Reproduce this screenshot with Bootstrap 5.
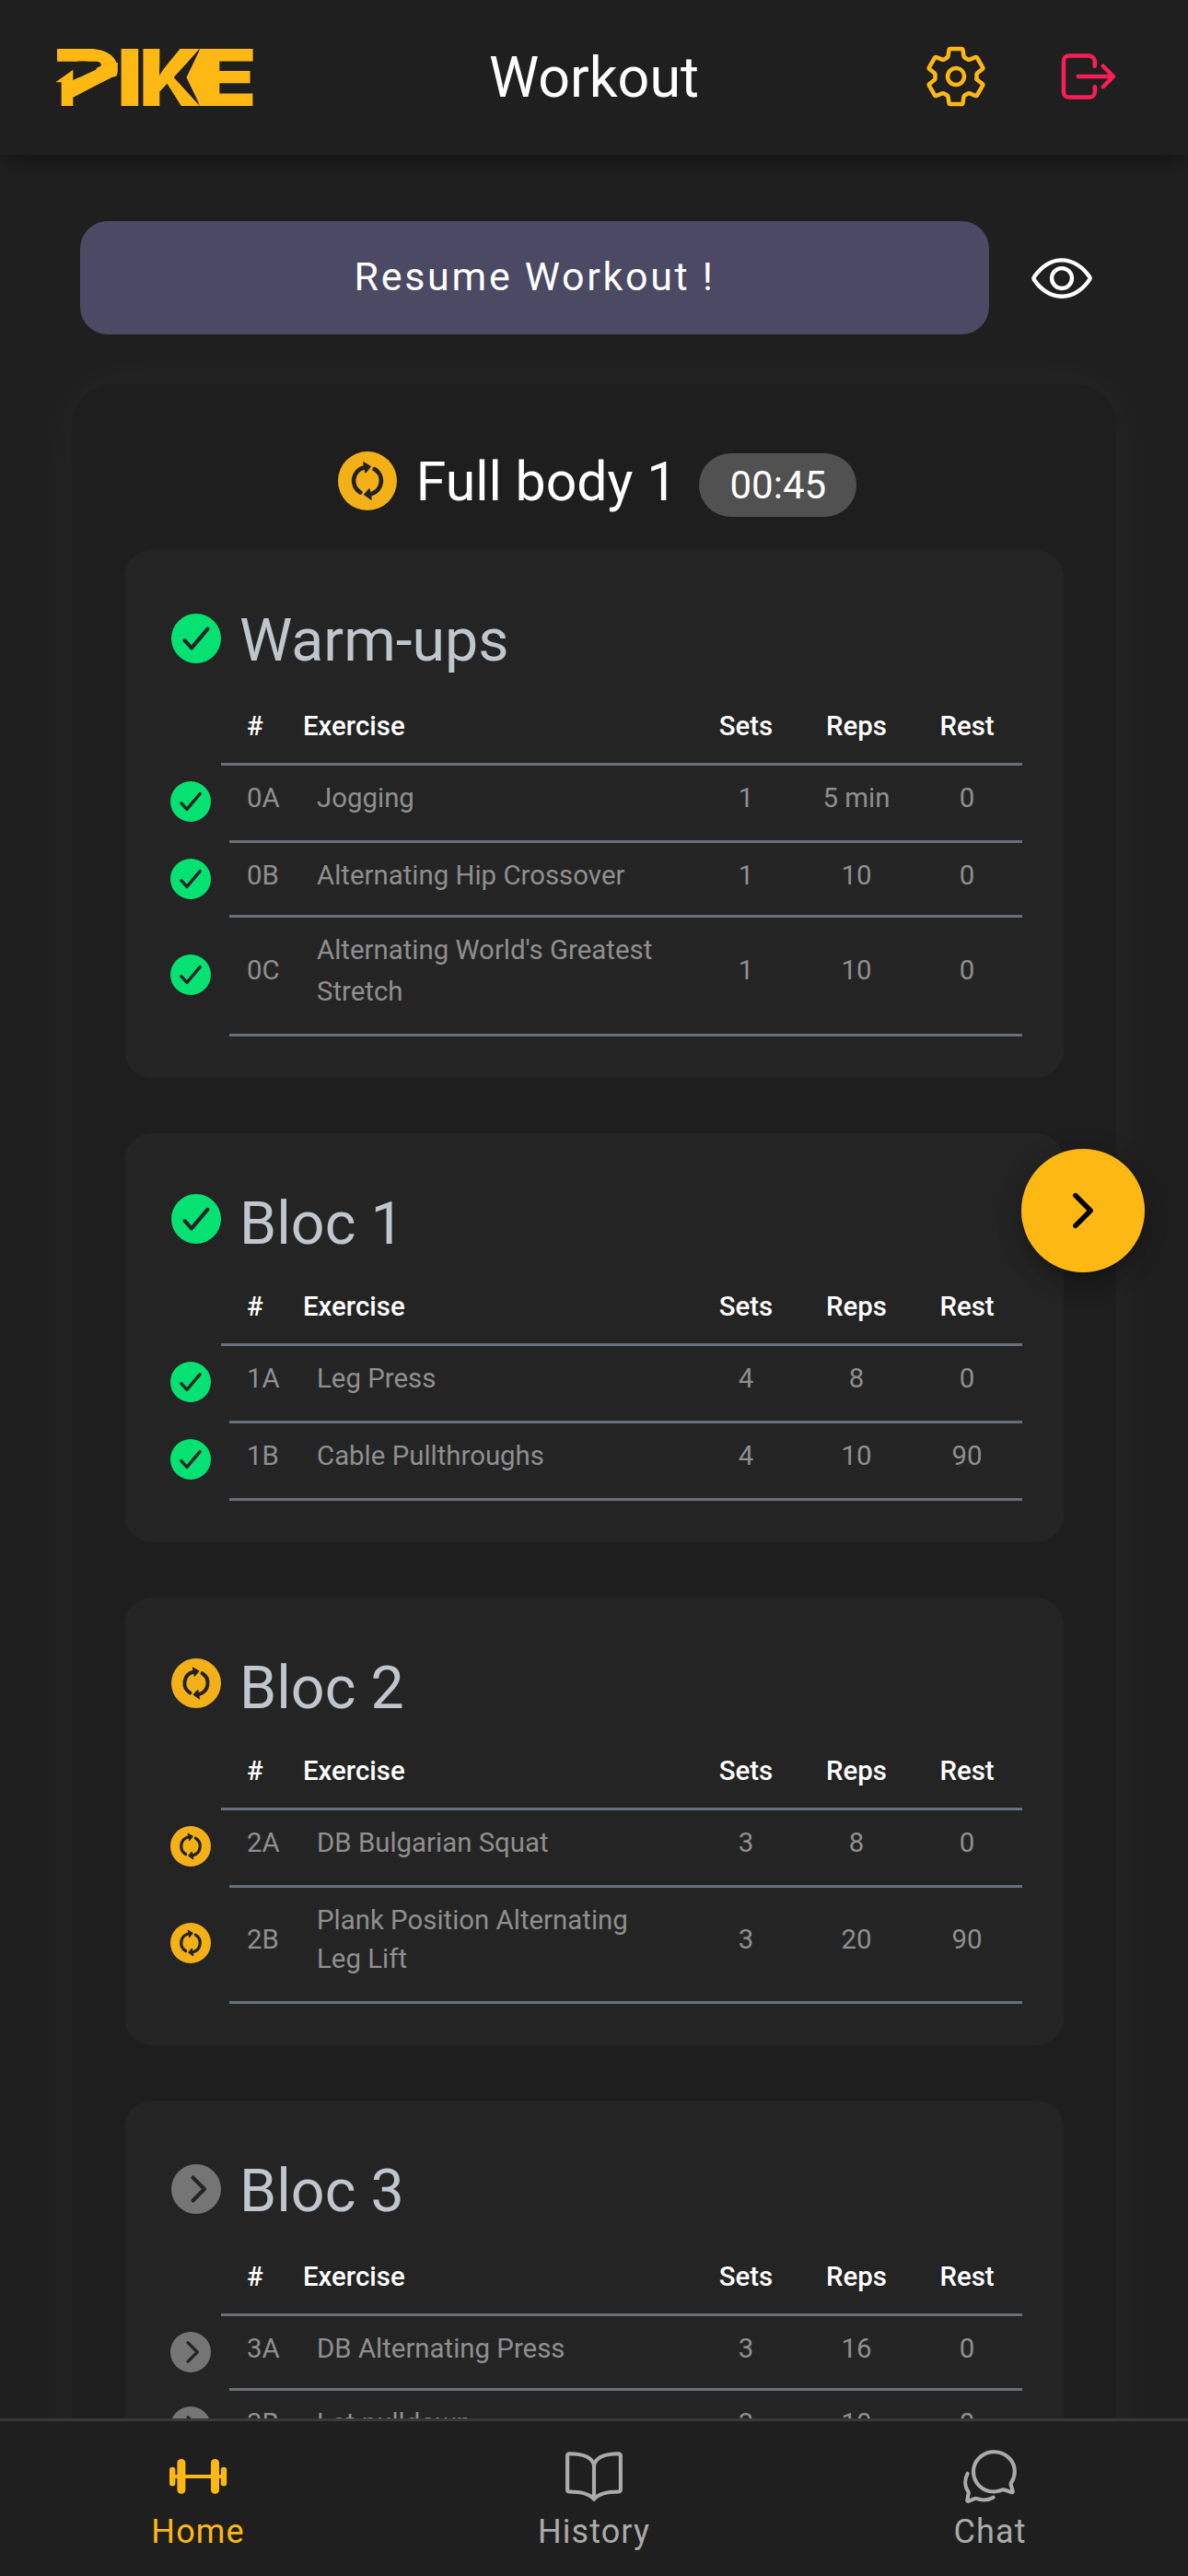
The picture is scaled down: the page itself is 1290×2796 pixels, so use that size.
<!DOCTYPE html>
<html lang="en">
<head>
<meta charset="utf-8">
<meta name="viewport" content="width=device-width, initial-scale=1">
<title>Workout</title>
<link href="https://cdn.jsdelivr.net/npm/bootstrap@5.3.0/dist/css/bootstrap.min.css" rel="stylesheet">
<style>
  html, body { height: 2796px; overflow: hidden; }
  body { background: #1f1f1f; color: #fff; font-family: Roboto, "Liberation Sans", sans-serif; }
  svg { display: block; flex: none; }
  .ln { fill: none; stroke: currentColor; stroke-width: 32; stroke-linecap: round; stroke-linejoin: round; }

  .topbar { height: 168px; display: grid; grid-template-columns: 1fr auto 1fr; padding: 0 72px 0 60px; background: #1f1f1f; box-shadow: 0 9px 24px -6px rgba(0,0,0,.5); }
  .topbar h1 { font-size: 61px; font-weight: 400; line-height: 84px; transform: translateX(6px); }
  .tools { gap: 72px; padding-bottom: 2px; }
  .amber { color: #fdb813; }
  .rose { color: #fa1e56; }
  .brand { overflow: visible; }
  .brand-type { font-family: Inter, sans-serif; font-weight: 900; font-size: 255.8px; fill: #fdb813; }
  .brand-gold { fill: #fdb813; }
  .brand-cut { fill: #1f1f1f; }

  .resume-row { padding: 72px 0 0 87px; gap: 44px; }
  .btn-resume { width: 987px; height: 123px; border: 0; border-radius: 30px; background: #4b4963; color: #fff; font-size: 43px; letter-spacing: 2.7px; padding: 0 0 2px; }
  .btn-resume:hover { background: #4b4963; color: #fff; }

  .panel { width: 1134px; height: 2400px; margin: 54px 0 0 78px; padding: 0 57px; border-radius: 45px; background: #1e1e1e; box-shadow: 0 0 60px rgba(255,255,255,.04); }
  .panel-title { height: 180px; padding: 73px 0 0 7px; }
  .panel-title h2 { font-size: 59px; font-weight: 400; line-height: 64px; margin: 1px 24px 0 21px; }
  .timer { width: 171px; height: 69px; border-radius: 35px; background: #515151; font-size: 42px; font-weight: 400; line-height: 69px; padding: 0; margin-top: 2px; }

  .bloc { width: 1020px; border: 0; border-radius: 30px; background: #242424; padding: 0 45px 45px 50px; margin-bottom: 60px; color: #8f8f8f; }
  .bloc-head { height: 150px; padding-top: 65px; }
  .bloc-head svg { margin: 1px 0 0 1px; }
  .bloc-head h3 { font-size: 64.5px; font-weight: 400; line-height: 66px; color: #c0c6cd; margin: 0 0 0 20px; }
  .bloc-head.tall { height: 153px; padding-top: 65px; }
  .bloc-head.tall svg { margin-top: 4px; }

  .line { border-bottom: 3px solid #67707b; font-size: 29.4px; line-height: 43px; }
  .head-line { height: 81px; margin-left: 55px; padding-bottom: 2px; color: #fff; font-weight: 500; }
  .c-no { flex: none; }
  .head-line .c-no { width: 89px; padding-left: 28px; }
  .row-line { height: 84px; }
  .row-line > svg { margin-bottom: 6px; }
  .row-line .line { margin-left: 20px; height: 100%; padding-bottom: 11px; }
  .row-line .c-no { width: 95px; padding-left: 19px; }
  .row-line .c-name { padding-right: 30px; flex: 1 1 0; }
  .c-num { width: 120px; flex: none; text-align: center; }
  .h82 { height: 81px; }
  .h82 .line { padding-bottom: 8px; }
  .h82 > svg { margin-bottom: 3px; }
  .h128 { height: 129px; }
  .h128 .c-name { line-height: 45px; }
  .h126 { height: 126px; }
  .h126 .c-name { line-height: 42px; }

  .fab { width: 134px; height: 134px; left: 1109px; top: 1247px; border-radius: 50%; background: #fdb813; box-shadow: 0 9px 15px -3px rgba(0,0,0,.2), 0 14px 30px rgba(0,0,0,.12), 0 3px 36px rgba(0,0,0,.08); }
  .tabs { height: 171px; background: #1f1f1f; border-top: 3px solid #383838; color: #ababab; }
  .tabs a { flex: 1; color: inherit; text-decoration: none; padding-top: 27px; font-size: 36px; letter-spacing: 1.1px; line-height: 54px; }
  .tabs a.active { color: #fdb813; }
</style>
</head>
<body>
<svg width="0" height="0" class="position-absolute">
  <symbol id="done" viewBox="48 48 416 416"><circle cx="256" cy="256" r="208" fill="#05e272"/><path d="M352 176L217.600 336 160 272" fill="none" stroke="#242424" stroke-width="32" stroke-linecap="round" stroke-linejoin="round"/></symbol>
  <symbol id="sync" viewBox="52 31 190 190"><circle cx="147" cy="126" r="95" fill="#f3b017"/><g fill="none" stroke="#222" stroke-width="14" stroke-linecap="round"><path d="M124 163A44 44 0 0 1 135 83"/><path d="M170 88A44 44 0 0 1 159 168"/></g><g fill="#222" stroke="#222" stroke-width="5" stroke-linejoin="round"><path d="M135 67L156 80 141 98Z"/><path d="M159 185L138 170 153 153Z"/></g></symbol>
  <symbol id="todo" viewBox="48 48 416 416"><circle cx="256" cy="256" r="208" fill="#757575"/><path d="M229 160l96 96-96 96" fill="none" stroke="#242424" stroke-width="32" stroke-linecap="round" stroke-linejoin="round"/></symbol>
</svg>

<div class="d-flex flex-column h-100 position-relative">
  <header class="topbar align-items-center flex-shrink-0">
    <svg class="brand" width="233.300" height="108" viewBox="30 -44 700 324" role="img" aria-label="PIKE">
      <g class="brand-type">
        <text x="20" y="211" textLength="222" lengthAdjust="spacingAndGlyphs">P</text>
        <text x="232" y="211" textLength="82" lengthAdjust="spacingAndGlyphs">I</text>
        <text x="304" y="211" textLength="206" lengthAdjust="spacingAndGlyphs">K</text>
        <text x="484" y="211" textLength="204" lengthAdjust="spacingAndGlyphs">E</text>
      </g>
      <!-- bolt arrow running through the first letter -->
      <path class="brand-cut" d="M28 66H165Q180 67 180 80L88 128V215H28ZM88 178L214 118 238 112V215H88Z"/>
      <path class="brand-gold" d="M31 134L88 93V128L180 85V70H234Q234 108 206 122L88 183V211H50V134Z"/>
      <!-- arrowhead notch between the last two letters -->
      <path class="brand-gold" d="M502 25L457 118 502 211H530V25Z"/>
      <path class="brand-cut" d="M501 25L416 118 501 211 457 118Z"/>
    </svg>
    <h1 class="m-0">Workout</h1>
    <div class="tools d-flex justify-content-end">
      <svg class="amber" width="72" height="72" viewBox="0 0 512 512"><path class="ln" d="M262.290 192.310a64 64 0 1057.400 57.400 64.130 64.130 0 00-57.400-57.400zM416.390 256a154.340 154.340 0 01-1.530 20.790l45.210 35.460a10.810 10.810 0 012.450 13.750l-42.770 74a10.810 10.810 0 01-13.140 4.590l-44.900-18.080a16.110 16.110 0 00-15.170 1.750A164.480 164.480 0 01325 400.800a15.940 15.940 0 00-8.820 12.140l-6.730 47.890a11.080 11.080 0 01-10.680 9.170h-85.540a11.110 11.110 0 01-10.690-8.870l-6.720-47.820a16.070 16.070 0 00-9-12.220 155.300 155.300 0 01-21.460-12.570 16 16 0 00-15.110-1.710l-44.890 18.070a10.810 10.810 0 01-13.140-4.580l-42.770-74a10.800 10.800 0 012.450-13.750l38.210-30a16.050 16.050 0 006-14.080c-.360-4.170-.580-8.330-.580-12.500s.210-8.270.580-12.350a16 16 0 00-6.070-13.940l-38.190-30A10.810 10.810 0 0149.480 186l42.770-74a10.810 10.810 0 0113.140-4.590l44.900 18.080a16.110 16.110 0 0015.170-1.750A164.480 164.480 0 01187 111.200a15.940 15.940 0 008.820-12.140l6.730-47.890A11.080 11.080 0 01213.230 42h85.540a11.110 11.110 0 0110.690 8.870l6.720 47.820a16.070 16.070 0 009 12.220 155.300 155.300 0 0121.460 12.570 16 16 0 0015.110 1.710l44.890-18.070a10.810 10.810 0 0113.140 4.580l42.770 74a10.800 10.800 0 01-2.450 13.750l-38.210 30a16.050 16.050 0 00-6.050 14.080c.330 4.140.550 8.300.550 12.470z"/></svg>
      <svg class="rose" width="72" height="72" viewBox="0 0 512 512"><path class="ln" d="M304 336v40a40 40 0 01-40 40H104a40 40 0 01-40-40V136a40 40 0 0140-40h152c22.090 0 48 17.910 48 40v40M368 336l80-80-80-80M176 256h256"/></svg>
    </div>
  </header>

  <main class="flex-grow-1 overflow-hidden">
    <div class="resume-row d-flex align-items-center">
      <button class="btn btn-resume">Resume Workout !</button>
      <svg width="70" height="70" viewBox="0 0 512 512"><path class="ln" d="M255.660 112c-77.940 0-157.890 45.110-220.830 135.330a16 16 0 00-.270 17.770C82.920 340.800 161.800 400 255.660 400c92.840 0 173.340-59.380 221.790-135.250a16.140 16.140 0 000-17.470C428.890 172.280 347.800 112 255.660 112z"/><circle class="ln" cx="256" cy="256" r="80"/></svg>
    </div>

    <section class="panel">
      <div class="panel-title d-flex justify-content-center align-items-start">
        <svg width="64" height="64"><use href="#sync"/></svg>
        <h2>Full body 1</h2>
        <span class="badge timer">00:45</span>
      </div>

      <div class="card bloc">
        <div class="bloc-head tall d-flex"><svg width="54" height="54"><use href="#done"/></svg><h3>Warm-ups</h3></div>
        <div class="line head-line d-flex align-items-center"><div class="c-no">#</div><div class="flex-grow-1">Exercise</div><div class="c-num">Sets</div><div class="c-num">Reps</div><div class="c-num">Rest</div></div>
        <div class="row-line d-flex align-items-center"><svg width="44" height="44"><use href="#done"/></svg><div class="line d-flex flex-grow-1 align-items-center"><div class="c-no">0A</div><div class="c-name">Jogging</div><div class="c-num">1</div><div class="c-num">5 min</div><div class="c-num">0</div></div></div>
        <div class="row-line h82 d-flex align-items-center"><svg width="44" height="44"><use href="#done"/></svg><div class="line d-flex flex-grow-1 align-items-center"><div class="c-no">0B</div><div class="c-name">Alternating Hip Crossover</div><div class="c-num">1</div><div class="c-num">10</div><div class="c-num">0</div></div></div>
        <div class="row-line h128 d-flex align-items-center"><svg width="44" height="44"><use href="#done"/></svg><div class="line d-flex flex-grow-1 align-items-center"><div class="c-no">0C</div><div class="c-name">Alternating World's Greatest Stretch</div><div class="c-num">1</div><div class="c-num">10</div><div class="c-num">0</div></div></div>
      </div>

      <div class="card bloc">
        <div class="bloc-head d-flex"><svg width="54" height="54"><use href="#done"/></svg><h3>Bloc 1</h3></div>
        <div class="line head-line d-flex align-items-center"><div class="c-no">#</div><div class="flex-grow-1">Exercise</div><div class="c-num">Sets</div><div class="c-num">Reps</div><div class="c-num">Rest</div></div>
        <div class="row-line d-flex align-items-center"><svg width="44" height="44"><use href="#done"/></svg><div class="line d-flex flex-grow-1 align-items-center"><div class="c-no">1A</div><div class="c-name">Leg Press</div><div class="c-num">4</div><div class="c-num">8</div><div class="c-num">0</div></div></div>
        <div class="row-line d-flex align-items-center"><svg width="44" height="44"><use href="#done"/></svg><div class="line d-flex flex-grow-1 align-items-center"><div class="c-no">1B</div><div class="c-name">Cable Pullthroughs</div><div class="c-num">4</div><div class="c-num">10</div><div class="c-num">90</div></div></div>
      </div>

      <div class="card bloc">
        <div class="bloc-head d-flex"><svg width="54" height="54"><use href="#sync"/></svg><h3>Bloc 2</h3></div>
        <div class="line head-line d-flex align-items-center"><div class="c-no">#</div><div class="flex-grow-1">Exercise</div><div class="c-num">Sets</div><div class="c-num">Reps</div><div class="c-num">Rest</div></div>
        <div class="row-line d-flex align-items-center"><svg width="44" height="44"><use href="#sync"/></svg><div class="line d-flex flex-grow-1 align-items-center"><div class="c-no">2A</div><div class="c-name">DB Bulgarian Squat</div><div class="c-num">3</div><div class="c-num">8</div><div class="c-num">0</div></div></div>
        <div class="row-line h126 d-flex align-items-center"><svg width="44" height="44"><use href="#sync"/></svg><div class="line d-flex flex-grow-1 align-items-center"><div class="c-no">2B</div><div class="c-name">Plank Position Alternating Leg Lift</div><div class="c-num">3</div><div class="c-num">20</div><div class="c-num">90</div></div></div>
      </div>

      <div class="card bloc">
        <div class="bloc-head tall d-flex"><svg width="54" height="54"><use href="#todo"/></svg><h3>Bloc 3</h3></div>
        <div class="line head-line d-flex align-items-center"><div class="c-no">#</div><div class="flex-grow-1">Exercise</div><div class="c-num">Sets</div><div class="c-num">Reps</div><div class="c-num">Rest</div></div>
        <div class="row-line h82 d-flex align-items-center"><svg width="44" height="44"><use href="#todo"/></svg><div class="line d-flex flex-grow-1 align-items-center"><div class="c-no">3A</div><div class="c-name">DB Alternating Press</div><div class="c-num">3</div><div class="c-num">16</div><div class="c-num">0</div></div></div>
        <div class="row-line h82 d-flex align-items-center"><svg width="44" height="44"><use href="#todo"/></svg><div class="line d-flex flex-grow-1 align-items-center"><div class="c-no">3B</div><div class="c-name">Lat pulldown</div><div class="c-num">3</div><div class="c-num">10</div><div class="c-num">0</div></div></div>
      </div>
    </section>
  </main>

  <nav class="tabs d-flex flex-shrink-0 position-relative">
    <a href="#" class="active d-flex flex-column align-items-center"><svg width="66" height="66" viewBox="0 0 66 66" fill="currentColor"><rect x="3" y="31" width="60" height="4"/><rect x="2" y="22.700" width="6.400" height="20.700" rx="3.200"/><rect x="10.400" y="14" width="9" height="37.700" rx="4.300"/><rect x="47" y="14" width="9" height="37.700" rx="4.300"/><rect x="57.800" y="22.700" width="6.400" height="20.700" rx="3.200"/></svg>Home</a>
    <a href="#" class="d-flex flex-column align-items-center"><svg width="66" height="66" viewBox="0 0 512 512"><path class="ln" d="M256 160c16-63.160 76.430-95.410 208-96a15.940 15.940 0 0116 16v288a16 16 0 01-16 16c-128 0-177.450 25.810-208 64-30.370-38-80-64-208-64-9.880 0-16-8.050-16-17.930V80a15.940 15.940 0 0116-16c131.570.590 192 32.840 208 96zM256 160v288"/></svg>History</a>
    <a href="#" class="d-flex flex-column align-items-center"><svg width="66" height="66" viewBox="0 0 512 512"><path class="ln" d="M431 320.600c-1-3.600 1.200-8.600 3.300-12.200a33.680 33.680 0 012.100-3.100A162 162 0 00464 215c.300-92.200-77.500-167-173.700-167-83.900 0-153.900 57.100-170.300 132.900a160.700 160.700 0 00-3.700 34.200c0 92.300 74.800 169.100 171 169.100 15.300 0 35.900-4.600 47.200-7.700s22.500-7.200 25.400-8.300a26.440 26.440 0 019.300-1.700 26 26 0 0110.100 2l56.700 20.100a13.520 13.520 0 003.900 1 8 8 0 008-8 12.850 12.850 0 00-.500-2.700z"/><path class="ln" d="M66.460 232a146.230 146.230 0 006.390 152.670c2.310 3.490 3.610 6.190 3.210 8s-11.930 61.870-11.930 61.870a8 8 0 002.710 7.680A8.170 8.170 0 0072 464a7.260 7.260 0 002.910-.600l56.210-22a15.700 15.700 0 0112 .200c18.940 7.380 39.880 12 60.830 12A159.210 159.210 0 00284 432.110"/></svg>Chat</a>
  </nav>

  <button class="fab btn p-0 border-0 position-absolute d-flex align-items-center justify-content-center text-black" aria-label="Next"><svg width="58" height="58" viewBox="0 0 512 512" fill="none" stroke="currentColor" stroke-width="48" stroke-linecap="round" stroke-linejoin="round"><path d="M184 112l144 144-144 144"/></svg></button>
</div>
<script src="https://cdn.jsdelivr.net/npm/bootstrap@5.3.0/dist/js/bootstrap.bundle.min.js"></script>
</body>
</html>
